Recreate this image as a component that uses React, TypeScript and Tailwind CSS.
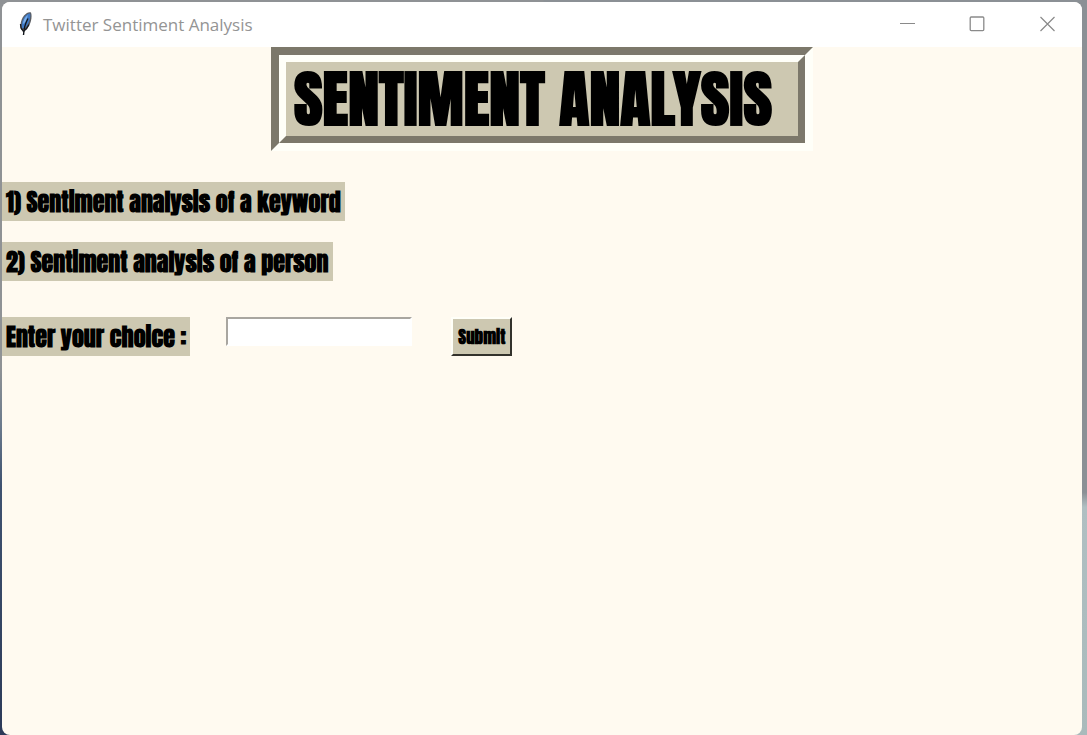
import React from "react";

const display =
  "font-['Impact','Anton','Liberation_Sans_Narrow','Liberation_Sans',sans-serif] font-bold text-black";

const row = "bg-[#cdc8b1] px-1 pt-[2px] text-[24px] leading-[37px]";

function Feather() {
  return (
    <svg width="16" height="26" viewBox="0 0 16 26" aria-hidden="true">
      <path d="M3.500 19C1.500 15.500 2.500 9 6 4.500C8.500 1.500 11.500 .5 13 1.500C14.500 6 13 13 8.500 18.500Z" fill="#5a5d62" />
      <path d="M4 17.500C3 13 4.500 8.500 7.300 5C9 3 11 2 12.200 2.800C12.800 7 11 12.500 7.500 16.500Z" fill="#3f79c4" />
      <path d="M5 13C5 9.500 7 6 10 4L7.500 11Z" fill="#7db1ea" />
      <path d="M10 7.500C8 11 6 15 5.500 24" fill="none" stroke="#11151b" strokeWidth="1.400" />
      <path d="M2.500 13L3 17L5.500 20.500L8.500 17.500L11 13.500" fill="none" stroke="#1a1c20" strokeWidth="1.300" />
    </svg>
  );
}

function TitleBar() {
  return (
    <header className="flex h-[45px] items-center bg-white pb-[2px] pl-4">
      <Feather />
      <span className="ml-[9px] grow pt-[2px] font-['Segoe_UI','Open_Sans',sans-serif] text-[17px] leading-6 text-[#949494]">
        Twitter Sentiment Analysis
      </span>
      <button type="button" aria-label="Minimize" className="flex h-full w-[70px] items-center justify-center">
        <svg width="16" height="16" viewBox="0 0 16 16" stroke="#8a8a8a" fill="none">
          <path d="M1 7.500H16" />
        </svg>
      </button>
      <button type="button" aria-label="Maximize" className="flex h-full w-[70px] items-center justify-center">
        <svg width="16" height="16" viewBox="0 0 16 16" stroke="#8a8a8a" fill="none">
          <rect x="1.200" y="1" width="13.600" height="13.600" rx="1" strokeWidth="1.300" />
        </svg>
      </button>
      <button type="button" aria-label="Close" className="flex h-full w-[70px] items-center justify-center">
        <svg width="16" height="16" viewBox="0 0 16 16" stroke="#8a8a8a" fill="none">
          <path d="M1.500 1L15.500 15M15.500 1L1.500 15" strokeWidth="1.200" />
        </svg>
      </button>
    </header>
  );
}

export default function App() {
  return (
    <div className="flex min-h-screen flex-col bg-[linear-gradient(to_bottom,#8f9295_50%,#6b7a8c_58%,#3f5270_66%,#2c3a58_100%),linear-gradient(to_bottom,#8b9095_67%,#b0bfc2_69%,#a9babb_100%)] bg-[length:50%_100%,51%_100%] bg-[position:left,right] bg-no-repeat pt-[2px] pr-[5px] pl-[2px]">
      <div className="flex grow flex-col overflow-hidden rounded-lg bg-[#fffaf0]">
        <TitleBar />
        <main className="flex flex-col items-start">
          <div className="self-center border-8 border-t-[#7c786a] border-r-[#fffff8] border-b-[#fffff8] border-l-[#7c786a]">
            <h1
              className={`${display} flex h-[88px] w-[526px] items-center border-[7px] border-t-[#fffff8] border-r-[#7c786a] border-b-[#7c786a] border-l-[#fffff8] bg-[#cdc8b1] px-2 text-[62px] leading-[72px] whitespace-nowrap`}
            >
              SENTIMENT ANALYSIS
            </h1>
          </div>
          <p className={`${display} ${row} mt-[31px]`}>1) Sentiment analysis of a keyword</p>
          <p className={`${display} ${row} mt-[21px]`}>2) Sentiment analysis of a person</p>
          <form className="mt-9 flex items-start" onSubmit={(e) => e.preventDefault()}>
            <label htmlFor="choice" className={`${display} ${row}`}>
              Enter your choice :
            </label>
            <input
              id="choice"
              type="text"
              className="ml-9 h-[29px] w-[186px] border-2 border-t-[#a9a6a0] border-r-white border-b-white border-l-[#a9a6a0] bg-white px-1 outline-none"
            />
            <button
              type="submit"
              className={`${display} ml-[39px] flex h-[39px] w-[61px] items-center justify-center border-2 border-t-[#fffff8] border-r-[#33322c] border-b-[#33322c] border-l-[#fffff8] bg-[#cdc8b1] pt-[2px] text-[17px]`}
            >
              Submit
            </button>
          </form>
        </main>
      </div>
    </div>
  );
}
